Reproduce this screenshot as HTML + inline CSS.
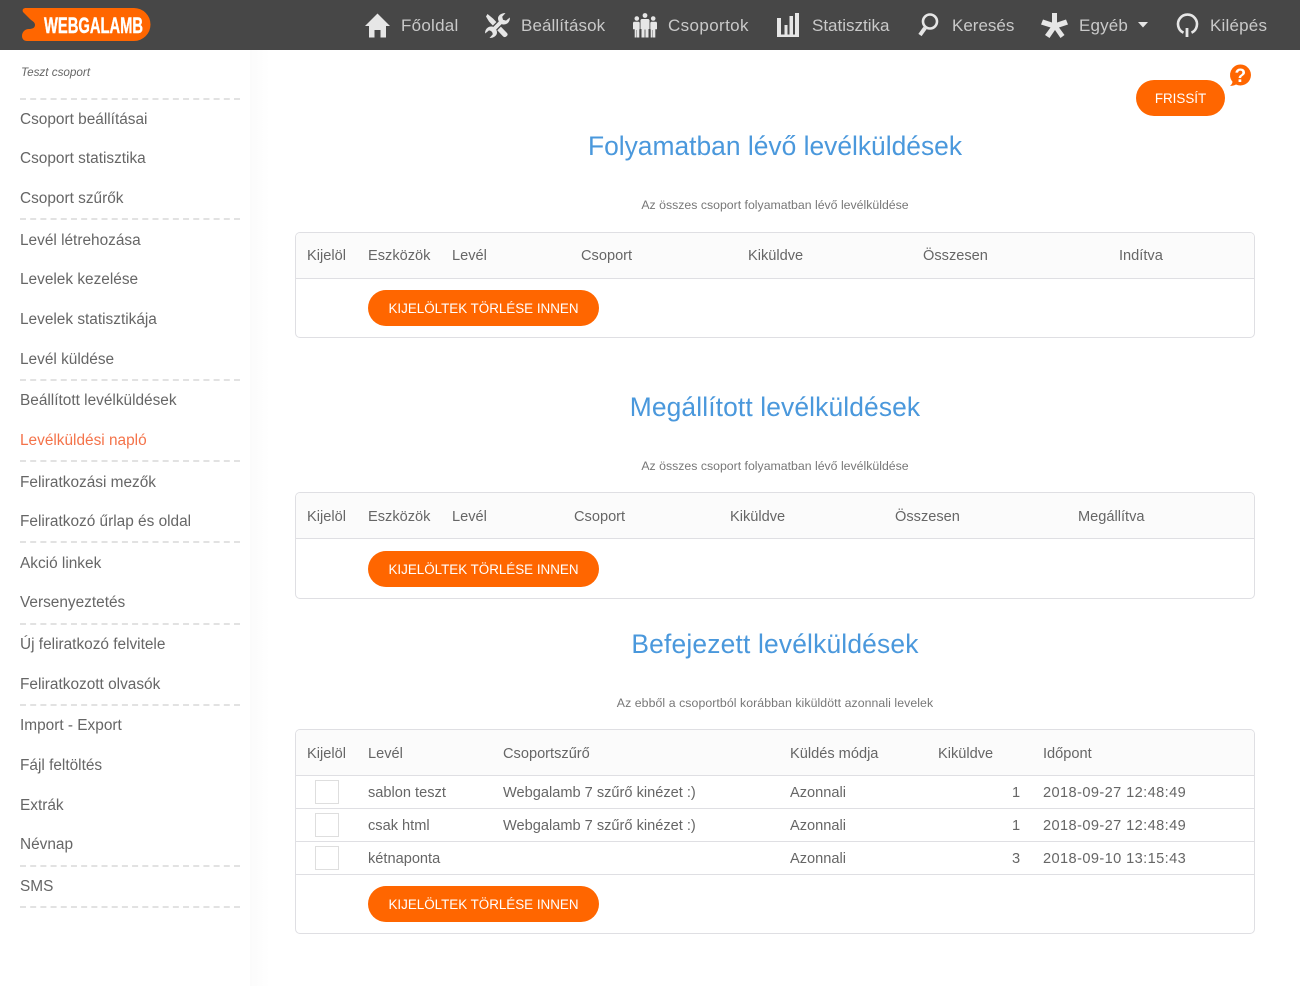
<!DOCTYPE html>
<html lang="hu"><head><meta charset="utf-8"><title>Webgalamb</title>
<style>
html,body{margin:0;padding:0;background:#fff}
body{width:1300px;height:986px;position:relative;overflow:hidden;font-family:"Liberation Sans",sans-serif;color:#666}
div,span,h2,a{position:absolute;white-space:nowrap;margin:0}
#top{left:0;top:0;width:1300px;height:50px;background:#474747}
.n{top:16px;line-height:20px;font-size:17px;color:#c9c9c9}
svg{position:absolute;overflow:visible}
#shade{left:250px;top:50px;width:20px;height:936px;background:linear-gradient(90deg,#fbfbfb,#fff)}
.s{left:20px;line-height:20px;font-size:15.4px;color:#666;margin-top:1px}
.d{left:20px;width:220px;height:0;border-top:2px dashed #e2e2e2}
h2{left:295px;width:960px;text-align:center;font-weight:400;font-size:26.4px;line-height:32px;color:#4a98dc}
.sub{left:295px;width:960px;text-align:center;font-size:12.3px;line-height:16px;color:#777}
.box{left:295px;width:958px;border:1px solid #dfdfe3;border-radius:5px;background:#fff;overflow:hidden}
.hd{left:0;top:0;width:958px;height:45px;background:#fbfbfb;border-bottom:1px solid #dfdfe3}
.th,.td{line-height:20px;font-size:14.6px;color:#666;margin-top:1px}
.dt{letter-spacing:.4px}
.ln{left:0;width:958px;height:1px;background:#dfdfe3}
.cb{left:19px;width:22px;height:22px;border:1px solid #dedede;background:#fff}
.btn{background:#f60;color:#fff;border-radius:18px;text-align:center;font-size:13.4px}
.b2{left:72px;width:231px;height:36px;line-height:38px}
</style></head><body>
<div id="top"></div>
<svg style="left:0;top:0" width="160" height="50"><path d="M24 8H134a16.500 16.500 0 0 1 0 33H27c-3 0-5-2-5-5 0-4 3-7 7-7 3 0 6-1 6-4 0-3-3-4-5-6l-7-7c-1-2 0-4 3-4z" fill="#f60"/><rect x="32" y="23" width="2" height="2" fill="#474747"/><text x="44" y="33" font-family="Liberation Sans" font-weight="700" font-size="22" fill="#fff" textLength="99" lengthAdjust="spacingAndGlyphs" stroke="#fff" stroke-width=".4">WEBGALAMB</text></svg>

<svg style="left:365px;top:13px" width="25" height="25" viewBox="0 0 25 25"><path d="M12.500 0.500L25 13h-4v11.500h-5.500V17h-6v7.500H4V13H0z" fill="#e6e6e6"/></svg>
<span class="n" style="left:401px;letter-spacing:.25px">Főoldal</span>
<svg style="left:485px;top:13px" width="25" height="25" viewBox="0 0 25 25"><path d="M2.500 1L8 5.500l13.500 14c1.500 1.500 1.500 2.500 0 3.800-1.300 1.200-2.500 1-3.800-.3L4 8.500 1 3.500z" fill="#e6e6e6"/><path d="M18 7L6.500 18.500" stroke="#474747" stroke-width="6.500"/><path d="M18 7L6.500 18.500" stroke="#e6e6e6" stroke-width="3.800"/><path d="M24.800 4.500c.6 3.500-2.300 7.500-6.800 7-2.500-.3-5-3-5-6C13 2.500 16 0 20.500 0l-3.300 3.800.8 3 3 .8z" fill="#e6e6e6"/><path d="M.2 20.500c-.6-3.500 2.300-7.500 6.800-7 2.500.3 5 3 5 6 0 3-3 5.500-7.500 5.500l3.300-3.800-.8-3-3-.8z" fill="#e6e6e6"/></svg>
<span class="n" style="left:521px;letter-spacing:.1px">Beállítások</span>
<svg style="left:633px;top:13px" width="24" height="25" viewBox="0 0 24 25" fill="#e6e6e6"><circle cx="12" cy="2.500" r="2.400"/><circle cx="3.800" cy="5.500" r="2.300"/><circle cx="20.200" cy="5.500" r="2.300"/><path d="M8.500 6h7l1 1v9h-1v8.500h-3.100v-8h-.8v8H8.500V16h-1V7z"/><path d="M.7 8.800h5.300l.7 1v6.500H6.300v8.200H4v-7.500h-.4v7.500H1.700v-8.200H0v-6.500z"/><path d="M18 8.800h5.300l.7 1v6.500h-1.700v8.200H20v-7.500h-.4v7.500h-1.900v-8.200h-.4v-6.500z"/></svg>
<span class="n" style="left:668px;letter-spacing:.38px">Csoportok</span>
<svg style="left:777px;top:13px" width="23" height="25" viewBox="0 0 23 25" fill="#e6e6e6"><path d="M0 5h4v16.500h3.500V12h3v9.500h2V3H16v18.500h2V0h4v24H0z"/></svg>
<span class="n" style="left:812px">Statisztika</span>
<svg style="left:917px;top:13px" width="23" height="25" viewBox="0 0 23 25" fill="none" stroke="#e6e6e6"><circle cx="13" cy="8.500" r="7" stroke-width="2.600"/><path d="M8 15L3 22" stroke-width="4"/></svg>
<span class="n" style="left:952px">Keresés</span>
<svg style="left:1041px;top:13px" width="27" height="25" viewBox="0 0 27 25" fill="#e6e6e6"><path d="M11 0h5v9.500l9-3 2 5-9 3 5.500 7.500-4 3L14 17l-5.500 8-4.500-3 5.500-7.500-9.500-3 2-5 9 3z"/></svg>
<span class="n" style="left:1079px;letter-spacing:.15px">Egyéb</span>
<svg style="left:1138px;top:22px" width="10" height="6"><path d="M0 0h10L5 5.500z" fill="#e6e6e6"/></svg>
<svg style="left:1176px;top:13px" width="22" height="25" viewBox="0 0 22 25" fill="none" stroke="#e6e6e6"><path d="M7.500 19.700A9.500 9.500 0 1 1 15.500 19.700" stroke-width="2.600"/><path d="M11 15v9" stroke-width="2.800"/></svg>
<span class="n" style="left:1210px;letter-spacing:.2px">Kilépés</span>

<div id="shade"></div>

<span class="s" style="top:62px;left:21px;font-size:11.700px;font-style:italic;color:#666">Teszt csoport</span>
<div class="d" style="top:98px"></div><div class="d" style="top:218px"></div><div class="d" style="top:379px"></div><div class="d" style="top:460px"></div><div class="d" style="top:541px"></div><div class="d" style="top:623px"></div><div class="d" style="top:704px"></div><div class="d" style="top:865px"></div><div class="d" style="top:906px"></div>
<a class="s" style="top:109px">Csoport beállításai</a>
<a class="s" style="top:148px">Csoport statisztika</a>
<a class="s" style="top:188px">Csoport szűrők</a>
<a class="s" style="top:230px">Levél létrehozása</a>
<a class="s" style="top:269px">Levelek kezelése</a>
<a class="s" style="top:309px">Levelek statisztikája</a>
<a class="s" style="top:349px">Levél küldése</a>
<a class="s" style="top:390px">Beállított levélküldések</a>
<a class="s" style="top:430px;color:#f4734a">Levélküldési napló</a>
<a class="s" style="top:472px">Feliratkozási mezők</a>
<a class="s" style="top:511px">Feliratkozó űrlap és oldal</a>
<a class="s" style="top:553px">Akció linkek</a>
<a class="s" style="top:592px">Versenyeztetés</a>
<a class="s" style="top:634px">Új feliratkozó felvitele</a>
<a class="s" style="top:674px">Feliratkozott olvasók</a>
<a class="s" style="top:715px">Import - Export</a>
<a class="s" style="top:755px">Fájl feltöltés</a>
<a class="s" style="top:795px">Extrák</a>
<a class="s" style="top:834px">Névnap</a>
<a class="s" style="top:876px">SMS</a>

<a class="btn" style="left:1136px;top:80px;width:89px;height:36px;line-height:38px">FRISSÍT</a>
<svg style="left:1229px;top:64px" width="23" height="23" viewBox="0 0 23 23"><path d="M11.500 .500a10.500 10.500 0 1 1-4.500 20c-2 1-4 1.500-6 1.300 1.500-1 2.300-2.300 2.500-4A10.500 10.500 0 0 1 11.500 .500z" fill="#f60"/><text x="11.300" y="18" text-anchor="middle" font-family="Liberation Sans" font-weight="700" font-size="19" fill="#fff">?</text></svg>

<h2 style="top:130px">Folyamatban lévő levélküldések</h2>
<div class="sub" style="top:197px">Az összes csoport folyamatban lévő levélküldése</div>
<div class="box" style="top:232px;height:104px">
<div class="hd"></div>
<span class="th" style="left:11px;top:12px">Kijelöl</span><span class="th" style="left:72px;top:12px">Eszközök</span><span class="th" style="left:156px;top:12px">Levél</span><span class="th" style="left:285px;top:12px">Csoport</span><span class="th" style="left:452px;top:12px">Kiküldve</span><span class="th" style="left:627px;top:12px">Összesen</span><span class="th" style="left:823px;top:12px">Indítva</span>
<a class="btn b2" style="top:57px">KIJELÖLTEK TÖRLÉSE INNEN</a>
</div>

<h2 style="top:391px;letter-spacing:.12px">Megállított levélküldések</h2>
<div class="sub" style="top:458px">Az összes csoport folyamatban lévő levélküldése</div>
<div class="box" style="top:492px;height:105px">
<div class="hd"></div>
<span class="th" style="left:11px;top:13px">Kijelöl</span><span class="th" style="left:72px;top:13px">Eszközök</span><span class="th" style="left:156px;top:13px">Levél</span><span class="th" style="left:278px;top:13px">Csoport</span><span class="th" style="left:434px;top:13px">Kiküldve</span><span class="th" style="left:599px;top:13px">Összesen</span><span class="th" style="left:782px;top:13px">Megállítva</span>
<a class="btn b2" style="top:58px">KIJELÖLTEK TÖRLÉSE INNEN</a>
</div>

<h2 style="top:628px;letter-spacing:.17px">Befejezett levélküldések</h2>
<div class="sub" style="top:695px;letter-spacing:.07px">Az ebből a csoportból korábban kiküldött azonnali levelek</div>
<div class="box" style="top:729px;height:203px">
<div class="hd"></div>
<span class="th" style="left:11px;top:13px">Kijelöl</span><span class="th" style="left:72px;top:13px">Levél</span><span class="th" style="left:207px;top:13px">Csoportszűrő</span><span class="th" style="left:494px;top:13px">Küldés módja</span><span class="th" style="left:642px;top:13px">Kiküldve</span><span class="th" style="left:747px;top:13px">Időpont</span>

<div class="cb" style="top:50px"></div>
<span class="td" style="left:72px;top:52px">sablon teszt</span><span class="td" style="left:207px;top:52px">Webgalamb 7 szűrő kinézet :)</span><span class="td" style="left:494px;top:52px">Azonnali</span><span class="td" style="left:716px;top:52px">1</span><span class="td dt" style="left:747px;top:52px">2018-09-27 12:48:49</span>
<div class="ln" style="top:78px"></div>
<div class="cb" style="top:83px"></div>
<span class="td" style="left:72px;top:85px">csak html</span><span class="td" style="left:207px;top:85px">Webgalamb 7 szűrő kinézet :)</span><span class="td" style="left:494px;top:85px">Azonnali</span><span class="td" style="left:716px;top:85px">1</span><span class="td dt" style="left:747px;top:85px">2018-09-27 12:48:49</span>
<div class="ln" style="top:111px"></div>
<div class="cb" style="top:116px"></div>
<span class="td" style="left:72px;top:118px">kétnaponta</span><span class="td" style="left:494px;top:118px">Azonnali</span><span class="td" style="left:716px;top:118px">3</span><span class="td dt" style="left:747px;top:118px">2018-09-10 13:15:43</span>
<div class="ln" style="top:144px"></div>
<a class="btn b2" style="top:156px">KIJELÖLTEK TÖRLÉSE INNEN</a>
</div>
</body></html>
